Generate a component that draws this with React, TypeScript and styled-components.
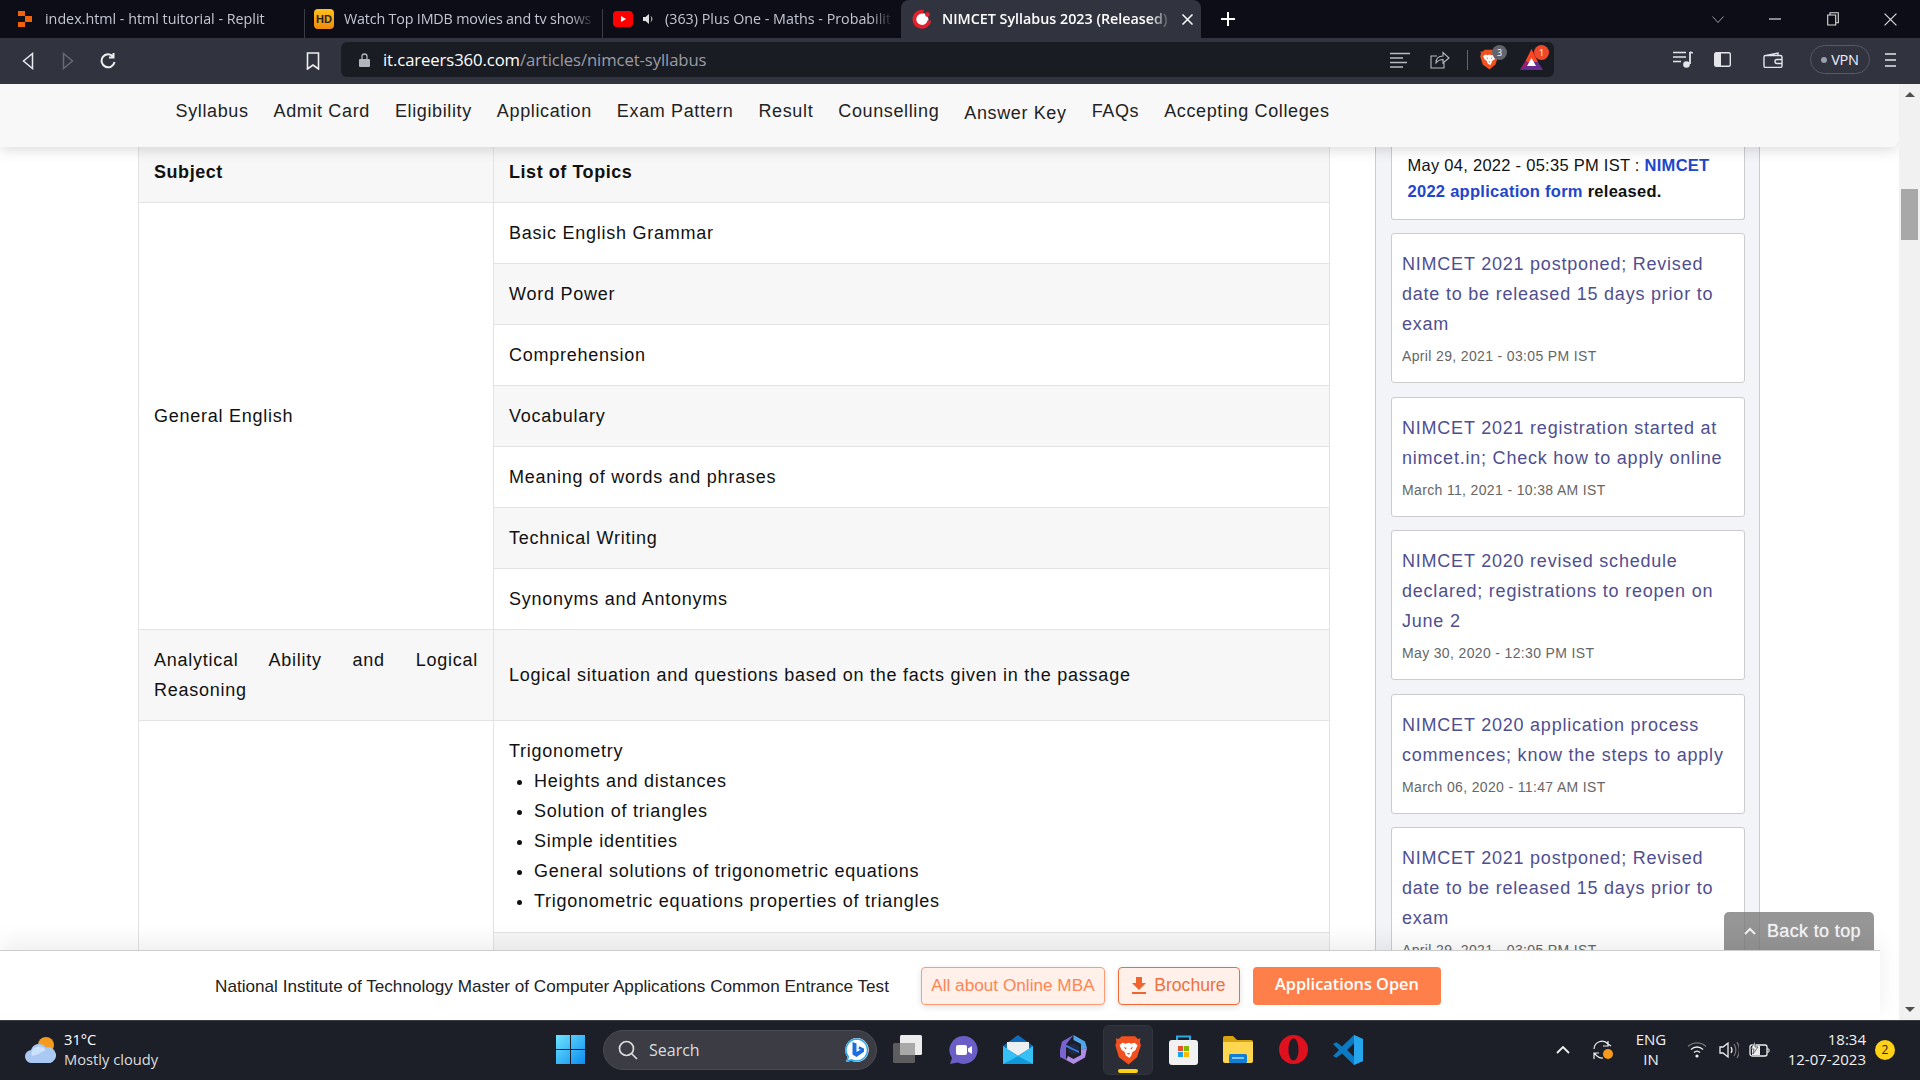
import React from 'react';
import styled, { createGlobalStyle } from 'styled-components';

const Global = createGlobalStyle`
  html, body { margin: 0; padding: 0; width: 1920px; height: 1080px; overflow: hidden; background: #fff; }
  body { font-family: "Liberation Sans", Arial, sans-serif; color: #111; }
  * { box-sizing: border-box; }
`;

const Shell = styled.div`
  width: 1920px; height: 1080px; display: flex; flex-direction: column; overflow: hidden;
`;

/* ---------- tab strip ---------- */
const TabStrip = styled.div`
  height: 38px; flex: none; background: #0c0d16; display: flex; align-items: stretch;
  font-family: "Open Sans", sans-serif;
`;
const Tab = styled.div<{ $w: number; $pad: number; $active?: boolean; $divider?: boolean }>`
  width: ${p => p.$w}px; flex: none; display: flex; align-items: center; gap: 10px;
  padding-left: ${p => p.$pad}px; padding-right: 8px; position: relative;
  font-size: 14.3px; color: ${p => (p.$active ? '#fff' : '#c3c6d2')};
  font-weight: ${p => (p.$active ? 600 : 400)};
  background: ${p => (p.$active ? '#31343f' : 'transparent')};
  border-radius: ${p => (p.$active ? '8px 8px 0 0' : '0')};
  ${p => p.$divider && `
    &::after { content: ''; position: absolute; right: 0; top: 9px; bottom: 0; width: 1px; background: #3a3c46; }
  `}
`;
const TabTitle = styled.span<{ $nudge?: number; $tight?: boolean }>`
  flex: 1; min-width: 0; white-space: nowrap; overflow: hidden; margin-left: ${p => p.$nudge ?? 0}px; padding-bottom: 2px;
  letter-spacing: ${p => (p.$tight ? '-0.17px' : '0')};
  -webkit-mask-image: linear-gradient(90deg, #000 90%, transparent 100%);
  mask-image: linear-gradient(90deg, #000 90%, transparent 100%);
`;
const HdBadge = styled.span`
  width: 20px; height: 20px; border-radius: 4px; flex: none; background: linear-gradient(#ffc21a, #f08a0c);
  color: #222; font: 700 11px "Liberation Sans", sans-serif; display: flex; align-items: center; justify-content: center;
`;
const NewTab = styled.div`
  width: 54px; display: flex; align-items: center; justify-content: center; flex: none;
`;
const WindowControls = styled.div`
  margin-left: auto; display: flex; align-items: center; padding-right: 1px;
`;
const WinBtn = styled.div`
  width: 57.5px; display: flex; justify-content: center; align-items: center;
`;

/* ---------- toolbar ---------- */
const Toolbar = styled.div`
  height: 46px; flex: none; background: #31343f; display: flex; align-items: center; font-family: "Open Sans", sans-serif;
`;
const NavButtons = styled.div`
  width: 341px; flex: none; display: flex; align-items: center;
`;
const BarSlot = styled.div<{ $w: number; $left?: number }>`
  width: ${p => p.$w}px; margin-left: ${p => p.$left ?? 0}px; flex: none; display: flex; align-items: center; justify-content: center; position: relative;
`;
const UrlBox = styled.div`
  width: 1213px; height: 35px; flex: none; background: #1a1c23; border-radius: 6px;
  display: flex; align-items: center; padding-left: 17px; margin-top: -3px;
`;
const LockIcon = styled.svg`
  flex: none; margin-left: 1px;
`;
const UrlText = styled.div`
  margin-left: 13px; font-size: 16.7px; color: #9a9da7; white-space: nowrap; letter-spacing: -0.1px;
  b { font-weight: 400; color: #fff; }
`;
const UrlTools = styled.div`
  margin-left: auto; display: flex; align-items: center; padding-right: 11px;
`;
const UrlSep = styled.div`
  width: 1px; height: 20px; background: #666; margin: 0 12px 0 17px;
`;
const CountBadge = styled.span<{ $bg: string; $right: number }>`
  position: absolute; top: -4px; right: ${p => p.$right}px; width: 15px; height: 15px; border-radius: 50%;
  background: ${p => p.$bg}; color: #fff; font: 400 9px "Open Sans", sans-serif;
  display: flex; align-items: center; justify-content: center;
`;
const VpnPill = styled.div`
  width: 60px; height: 29px; border: 1px solid #555a68; border-radius: 15px; margin-left: 27px; flex: none;
  display: flex; align-items: center; justify-content: center; gap: 4px; color: #eef; font-size: 14.5px; letter-spacing: -0.2px;
  i { width: 6px; height: 6px; border-radius: 50%; background: #9a9eac; }
`;
const BrowserTail = styled.div`
  display: flex; align-items: center; margin-left: 119px; margin-top: -3px;
`;

/* ---------- page ---------- */
const Viewport = styled.div`
  flex: 1; min-height: 0; display: flex;
`;
const Page = styled.div`
  flex: 1; min-width: 0; position: relative; overflow: hidden; background: #fff;
  display: flex; flex-direction: column;
`;
const Scrollbar = styled.div`
  width: 21px; flex: none; background: #f1f1f1; display: flex; flex-direction: column; align-items: center; position: relative;
`;
const ScrollArrow = styled.div<{ $down?: boolean }>`
  position: absolute; ${p => (p.$down ? 'bottom: 8px;' : 'top: 8px;')} width: 0; height: 0;
  border-left: 5px solid transparent; border-right: 5px solid transparent;
  ${p => (p.$down ? 'border-top: 5px solid #505050;' : 'border-bottom: 5px solid #505050;')}
`;
const ScrollThumb = styled.div`
  width: 17px; height: 51px; background: #a8a8a8; margin-top: 105px;
`;
const SectionNav = styled.nav`
  height: 63px; flex: none; background: #f8f8f8; border-radius: 0 0 8px 0; position: relative; z-index: 3;
  box-shadow: 0 3px 14px rgba(0,0,0,.14); display: flex; align-items: center; padding-left: 175.5px; padding-bottom: 8px; gap: 25px;
`;
const NavLink = styled.span<{ $drop?: boolean }>`
  font-size: 18px; letter-spacing: 0.63px; color: #222; white-space: nowrap;
  ${p => p.$drop && 'transform: translateY(2px);'}
`;
const Content = styled.div`
  flex: 1; min-height: 0; display: flex; align-items: flex-start; padding-left: 138px;
`;
const Table = styled.table`
  width: 1192px; flex: none; table-layout: fixed; border-collapse: separate; border-spacing: 0;
  border-left: 1px solid #e3e3e3; border-right: 1px solid #e3e3e3;
  font-size: 18px; line-height: 30px; letter-spacing: 0.75px; color: #111;
  th { background: #f7f7f7; font-weight: 700; text-align: left; padding: 10px 15px 15px; border-bottom: 1px solid #e3e3e3; letter-spacing: 0.55px; }
  td { padding: 15px; border-bottom: 1px solid #e3e3e3; background: #fff; vertical-align: middle; }
  tr:nth-child(even) td { background: #f7f7f7; }
  th:first-child, td:first-child { width: 355px; border-right: 1px solid #e3e3e3; }
  tr td.topic { border-right: 0; }
  tr.spanrow td { border-right: 0; }
  tr.spanrow td:first-child { border-right: 1px solid #e3e3e3; }
  tr.spanrow td.topic { border-right: 0; }
`;
const Justified = styled.td`
  text-align: justify;
`;
const BlankTopic = styled.td`
  height: 200px;
`;
const TopicList = styled.ul`
  margin: 0 0 1px; padding-left: 25px;
`;
const Side = styled.aside`
  width: 385px; margin-left: 45px; flex: none; align-self: stretch; background: #f3f4f8;
  border-left: 1px solid #ccc; border-right: 1px solid #ccc; padding-left: 15px; padding-right: 14px;
  display: flex; flex-direction: column; gap: 13.5px;
`;
const LeadCard = styled.div`
  background: #fff; border: 1px solid #ccc; border-top: 0; border-radius: 0 0 3px 3px;
  padding: 5px 15.5px 14.5px; font-size: 16.5px; line-height: 26px; letter-spacing: 0.27px; color: #111;
  b { font-weight: 700; }
  a { color: #2146cc; font-weight: 700; text-decoration: none; }
`;
const LeadLine = styled.div`
  white-space: nowrap;
`;
const NewsCard = styled.div`
  flex: none; background: #fff; border: 1px solid #ccc; border-radius: 3px; padding: 15px 10px 16px;
`;
const NewsTitle = styled.div`
  font-size: 18px; line-height: 30px; letter-spacing: 0.78px; color: #4f4f8f;
`;
const NewsDate = styled.div`
  font-size: 14px; line-height: 20px; margin-top: 7px; letter-spacing: 0.35px; color: #666;
`;
const BackToTop = styled.div`
  position: absolute; right: 25px; bottom: 70px; width: 150px; height: 38px; z-index: 4;
  background: rgba(120,120,120,.78); border-radius: 5px 5px 0 0; color: #f4f4f4; font-size: 18px; letter-spacing: .35px;
  text-shadow: 0 0 1px rgba(255,255,255,.7);
  display: flex; align-items: center; gap: 11px; padding-left: 20px;
`;
const BottomBar = styled.div`
  position: absolute; left: 0; right: 19px; bottom: 0; height: 70px; z-index: 4; background: #fff;
  border-top: 1px solid #ccc; box-shadow: 0 -8px 22px rgba(0,0,0,.07);
  display: flex; align-items: center; padding-left: 215px;
`;
const BarText = styled.span`
  font-size: 17.15px; color: #222; white-space: nowrap; margin-right: 32px; margin-top: 1px;
`;
const OutlineBtn = styled.div<{ $w: number; $strong?: boolean }>`
  width: ${p => p.$w}px; height: 38px; margin-right: 13px; background: #fff0ea; border-radius: 4px;
  border: 1px solid ${p => (p.$strong ? '#f26a35' : '#ff9a73')}; color: ${p => (p.$strong ? '#f0703e' : '#ff8553')};
  font-size: ${p => (p.$strong ? 17.6 : 17.2)}px; display: flex; align-items: center; justify-content: center; gap: 8px;
  box-shadow: 0 2px 6px rgba(0,0,0,.12); white-space: nowrap;
`;
const SolidBtn = styled.div`
  width: 188px; height: 38px; background: #ff7f4a; border-radius: 4px; color: #fff; padding-bottom: 4px;
  font: 600 16.3px "Open Sans", sans-serif; display: flex; align-items: center; justify-content: center;
`;

/* ---------- taskbar ---------- */
const Taskbar = styled.div`
  height: 60px; flex: none; background: #1c1f28; border-top: 1px solid #3a3d45; display: flex; align-items: center; padding: 0 25px 2px;
  font-family: "Open Sans", sans-serif; color: #f1f1f1;
`;
const Weather = styled.div`
  width: 531px; flex: none; display: flex; align-items: center; gap: 8px;
`;
const WeatherText = styled.div`
  font-size: 14.7px; line-height: 20px; color: #ddd; margin-top: -2px; b { font-weight: 400; display: block; color: #fff; }
`;
const SearchPill = styled.div`
  width: 274px; height: 40px; margin-left: 18px; flex: none; background: #3b3c44; border: 1px solid #4a4b53; border-radius: 20px;
  display: flex; align-items: center; padding: 0 7px 0 14px; gap: 11px; font-size: 16px; color: #ddd;
`;
const SearchLabel = styled.span`
  flex: 1; padding-top: 1px;
`;
const AppSlot = styled.div<{ $active?: boolean; $lead?: boolean }>`
  width: 55px; height: 50px; flex: none; display: flex; align-items: center; justify-content: center; position: relative;
  ${p => p.$lead && 'width: 55.5px; margin-left: 3px;'}
  ${p => p.$active && 'background: #2b2d36; border-radius: 6px; border: 1px solid #33353e; width: 50px; margin: 0 2.5px;'}
`;
const ActiveDot = styled.span`
  position: absolute; bottom: 1px; left: 14px; width: 20px; height: 4px; border-radius: 2px; background: #fcd116;
`;
const Tray = styled.div`
  margin-left: auto; display: flex; align-items: center;
`;
const TraySlot = styled.div<{ $w: number; $end?: boolean }>`
  width: ${p => p.$w}px; flex: none; display: flex; align-items: center; justify-content: ${p => (p.$end ? 'flex-end' : 'center')};
`;
const TrayText = styled.div<{ $right?: boolean }>`
  font-size: 15px; line-height: 20px; color: #f1f1f1; text-align: ${p => (p.$right ? 'right' : 'center')}; white-space: nowrap; margin-top: -2px;
`;
const Notify = styled.div`
  width: 20px; height: 20px; margin-left: 9px; border-radius: 50%; background: #fcd116; color: #222; font-size: 12px;
  display: flex; align-items: center; justify-content: center;
`;

/* ---------- icons ---------- */
const ReplitIcon = () => (
  <svg width="14" height="16" viewBox="0 0 14 16" style={{ flex: 'none' }}>
    <path fill="#f26207" d="M0 0h7v5H0zM7 5h7v6H7zM0 11h7v5H0z" />
  </svg>
);
const YtIcon = () => (
  <svg width="20" height="20" viewBox="0 0 20 20" style={{ flex: 'none' }}>
    <rect y="2" width="20" height="16" rx="4" fill="#f00" /><path d="M8 7l5 3-5 3z" fill="#fff" />
  </svg>
);
const SpeakerSmall = () => (
  <svg width="12" height="12" viewBox="0 0 12 12" style={{ flex: 'none' }}>
    <path d="M0 4h2.500L6 1v10L2.500 8H0z" fill="#ddd" /><path d="M8 3.500c1.200 1.500 1.200 3.500 0 5" stroke="#ddd" fill="none" />
  </svg>
);
const CareersIcon = () => (
  <svg width="20" height="20" viewBox="0 0 20 20" style={{ flex: 'none' }}>
    <circle cx="10" cy="10.500" r="6.500" fill="#fff" />
    <path d="M11.500 2.800A7.600 7.600 0 1 0 17.500 11.500" fill="none" stroke="#e3202c" strokeWidth="3.800" />
    <circle cx="15.500" cy="5.500" r="2.400" fill="#e3202c" />
  </svg>
);
const CloseX = ({ s = 11, c = '#fff', w = 1.5 }: { s?: number; c?: string; w?: number }) => (
  <svg width={s} height={s} viewBox="0 0 11 11" style={{ flex: 'none' }}>
    <path d="M.5.5l10 10M10.500.5l-10 10" stroke={c} strokeWidth={w} />
  </svg>
);
const Stroke = ({ w, h, d, c = '#e4e5ea', sw = 1.5 }: { w: number; h: number; d: string; c?: string; sw?: number }) => (
  <svg width={w} height={h} viewBox={`0 0 ${w} ${h}`} fill="none" stroke={c} strokeWidth={sw} style={{ flex: 'none' }}>
    <path d={d} />
  </svg>
);
const BraveShield = ({ s = 20 }: { s?: number }) => (
  <svg width={s * 0.9} height={s} viewBox="0 0 22 25" style={{ flex: 'none' }}>
    <path fill="#f1511e" d="M5.500 1h11l2.300 2.300 2.200-.6-.5 3.300.9 2.500-3.300 10L11 24.500 3 18.500l-3-10 .9-2.500L.4 2.700l2.200.6z" />
    <path fill="#fff" d="M6 6.500l2.700.8L11 6.500l2.300.8 2.700-.8 2.500 2-1.800 4.200-2.400 1.400-1 3-1.300 1.800h-.4L8.700 17l-1-3-2.400-1.400L3.500 8.500z" />
    <path fill="#f1511e" d="M7 10l2.500.8-1 1.200zM15 10l-2.500.8 1 1.200zM9.500 15h3L11 16.500z" />
  </svg>
);
const BatIcon = () => (
  <svg width="23" height="21" viewBox="0 0 23 21" style={{ flex: 'none' }}>
    <path fill="#662d91" d="M0 21L5 13h13l5 8z" />
    <path fill="#ff4724" d="M11.500 0L18 13H5z" />
    <path fill="#9e1f63" d="M0 21L6 11l2 4z" />
    <path fill="#fff" d="M11.500 9L16 17H7z" />
  </svg>
);
const WinLogo = () => (
  <svg width="29" height="29" viewBox="0 0 29 29" style={{ flex: 'none' }}>
    <defs><linearGradient id="wl" x1="0" y1="0" x2="1" y2="1"><stop offset="0" stopColor="#6fe4ff" /><stop offset="1" stopColor="#0a8cf0" /></linearGradient></defs>
    <path fill="url(#wl)" d="M0 0h14v14H0zM15 0h14v14H15zM0 15h14v14H0zM15 15h14v14H15z" />
  </svg>
);
const BingIcon = () => (
  <svg width="25" height="26" viewBox="0 0 25 26" style={{ flex: 'none' }}>
    <path fill="#fff" d="M12.500 1a12 12 0 1 1-5 22.800L2 25l1.500-5A12 12 0 0 1 12.500 1z" />
    <path fill="#1c6fe0" d="M8.500 5l4 1.500V15l4-2.200-2.200-1 1-2.500 4.700 2.300v3.200L12.500 20l-4-2.500z" />
    <path fill="none" stroke="#28a8ea" strokeWidth="1.500" d="M12.500 2a11 11 0 1 1-4.800 20.900L3 24l1.300-4.300A11 11 0 0 1 12.500 2z" />
  </svg>
);
const TaskView = () => (
  <svg width="30" height="29" viewBox="0 0 30 29" style={{ flex: 'none' }}>
    <rect x="0" y="8" width="22" height="20" rx="1.500" fill="#5d5d60" />
    <rect x="7" y="0" width="22" height="20" rx="1.500" fill="#ececec" />
    <rect x="7" y="8" width="15" height="12" fill="#a9a9a9" />
  </svg>
);
const ChatIcon = () => (
  <svg width="29" height="28" viewBox="0 0 29 28" style={{ flex: 'none' }}>
    <path fill="#6b5fc7" d="M14.500 0a14 14 0 1 1-6 26.600L1 28l2-6A14 14 0 0 1 14.500 0z" />
    <rect x="7" y="9" width="11" height="10" rx="2" fill="#fff" /><path d="M19 12.500l4-2.500v8l-4-2.500z" fill="#fff" />
  </svg>
);
const MailIcon = () => (
  <svg width="30" height="29" viewBox="0 0 30 29" style={{ flex: 'none' }}>
    <path fill="#0f6cbd" d="M15 0l15 11v4H0v-4z" />
    <path fill="#eceff2" d="M4 7h22v7l-11 7-11-7z" />
    <path fill="#35c1f5" d="M0 11l15 10 15-10v18H0z" />
    <path fill="#1197dc" d="M15 21l15 8H0l8-4z" />
  </svg>
);
const CopilotIcon = () => (
  <svg width="27" height="29" viewBox="0 0 27 29" style={{ flex: 'none' }}>
    <path fill="#4fa6e8" d="M13.500 0L25 6.500 27 13l-6 2V9L13.500 5z" />
    <path fill="#7a62d0" d="M13.500 0L2 6.500 0 15v7l6 3V9.500z" />
    <path fill="#b18ce6" d="M6 25l7.500 4L25 22.500 27 13l-6 2v5l-7.500 4L8 21z" />
    <path fill="#1f2a44" d="M8 14a5.500 5.500 0 1 1 11 0 5.500 5.500 0 0 1-11 0z" />
    <path fill="#3f78d8" d="M6 9.500l7.500 4L19 16v2L6 12z" />
  </svg>
);
const StoreIcon = () => (
  <svg width="29" height="30" viewBox="0 0 29 30" style={{ flex: 'none' }}>
    <path d="M8 6V1.500h13V6" fill="none" stroke="#29a9e8" strokeWidth="2" />
    <rect y="5" width="29" height="25" rx="3" fill="#f1f1f1" />
    <path fill="#e8502e" d="M9 11h5v5H9z" /><path fill="#7fb900" d="M15 11h5v5h-5z" />
    <path fill="#1aa3e8" d="M9 17h5v5H9z" /><path fill="#ffb900" d="M15 17h5v5h-5z" />
  </svg>
);
const FolderIcon = () => (
  <svg width="30" height="27" viewBox="0 0 30 27" style={{ flex: 'none' }}>
    <path fill="#d9a30f" d="M0 2a2 2 0 0 1 2-2h8l4 4h14a2 2 0 0 1 2 2v19H0z" />
    <path fill="#ffd64f" d="M0 6h30v19a2 2 0 0 1-2 2H2a2 2 0 0 1-2-2z" />
    <rect x="6" y="18" width="18" height="9" rx="1.500" fill="#0f7ed4" /><rect x="9" y="21" width="12" height="2" fill="#7cc4f2" />
  </svg>
);
const OperaIcon = () => (
  <svg width="29" height="29" viewBox="0 0 29 29" style={{ flex: 'none' }}>
    <path fillRule="evenodd" fill="#e0111f" d="M14.500 0a14.500 14.500 0 1 0 0 29 14.500 14.500 0 0 0 0-29zm0 3.500c3 0 5 4.800 5 11s-2 11-5 11-5-4.800-5-11 2-11 5-11z" />
  </svg>
);
const VsCodeIcon = () => (
  <svg width="30" height="30" viewBox="0 0 30 30" style={{ flex: 'none' }}>
    <path fill="#0b7ac2" d="M21 0l9 4v22l-9 4L9 18.500l-5.500 4.200L0 21l6-6-6-6 3.500-1.700L9 11.500z" />
    <path fill="#24a5ec" d="M21 0l9 4v22l-9 4zM21 8l-7 7 7 7z" fillRule="evenodd" />
    <path fill="#1c1f28" d="M21 8v14l-7-7z" />
  </svg>
);
const WeatherIcon = () => (
  <svg width="31" height="27" viewBox="0 0 31 27" style={{ flex: 'none' }}>
    <circle cx="21" cy="9" r="8" fill="#f59a1c" />
    <path fill="#a9c9f2" d="M7 27a6.500 6.500 0 0 1-1-13A8.500 8.500 0 0 1 21 11.500 6 6 0 0 1 25 27z" />
    <path fill="#dcebff" d="M7 20a6 6 0 0 1 0-5 8 8 0 0 1 13-2c1 3-4 2-6 5z" opacity=".7" />
  </svg>
);
const DownloadIcon = () => (
  <svg width="14" height="17" viewBox="0 0 14 17" style={{ flex: 'none' }}>
    <path fill="#f0642e" d="M4 0h6v6h4l-7 7-7-7h4zM0 15h14v2H0z" />
  </svg>
);

const news = [
  { t: 'NIMCET 2021 postponed; Revised date to be released 15 days prior to exam', d: 'April 29, 2021 - 03:05 PM IST' },
  { t: 'NIMCET 2021 registration started at nimcet.in; Check how to apply online', d: 'March 11, 2021 - 10:38 AM IST' },
  { t: 'NIMCET 2020 revised schedule declared; registrations to reopen on June 2', d: 'May 30, 2020 - 12:30 PM IST' },
  { t: 'NIMCET 2020 application process commences; know the steps to apply', d: 'March 06, 2020 - 11:47 AM IST' },
  { t: 'NIMCET 2021 postponed; Revised date to be released 15 days prior to exam', d: 'April 29, 2021 - 03:05 PM IST' },
];
const english = ['Word Power', 'Comprehension', 'Vocabulary', 'Meaning of words and phrases', 'Technical Writing', 'Synonyms and Antonyms'];
const trig = ['Heights and distances', 'Solution of triangles', 'Simple identities', 'General solutions of trigonometric equations', 'Trigonometric equations properties of triangles'];
const links = ['Syllabus', 'Admit Card', 'Eligibility', 'Application', 'Exam Pattern', 'Result', 'Counselling', 'Answer Key', 'FAQs', 'Accepting Colleges'];

export default function App() {
  return (
    <Shell>
      <Global />
      <TabStrip>
        <Tab $w={305} $pad={18} $divider>
          <ReplitIcon /><TabTitle $nudge={3}>index.html - html tuitorial - Replit</TabTitle>
        </Tab>
        <Tab $w={298} $pad={9} $divider>
          <HdBadge>HD</HdBadge><TabTitle $tight>Watch Top IMDB movies and tv shows</TabTitle>
        </Tab>
        <Tab $w={298} $pad={10}>
          <YtIcon /><SpeakerSmall /><TabTitle>(363) Plus One - Maths - Probabilit</TabTitle>
        </Tab>
        <Tab $w={300} $pad={11} $active>
          <CareersIcon /><TabTitle>NIMCET Syllabus 2023 (Released)</TabTitle><CloseX />
        </Tab>
        <NewTab><Stroke w={16} h={16} d="M8 1v14M1 8h14" c="#fff" sw={2} /></NewTab>
        <WindowControls>
          <WinBtn><Stroke w={12} h={7} d="M.5.5L6 6.500 11.500.5" c="#9a9ca6" sw={1} /></WinBtn>
          <WinBtn><Stroke w={12} h={2} d="M0 1h12" c="#ddd" sw={1.2} /></WinBtn>
          <WinBtn><Stroke w={12} h={14} d="M.7 3h8v10h-8zM3 3V.7h8.300v10H9" c="#ddd" sw={1.1} /></WinBtn>
          <WinBtn><CloseX s={13} c="#ddd" w={1} /></WinBtn>
        </WindowControls>
      </TabStrip>

      <Toolbar>
        <NavButtons>
          <BarSlot $w={12} $left={22}><Stroke w={12} h={18} d="M10.500 1.500L1.500 9l9 7.500z" c="#e8e9ee" /></BarSlot>
          <BarSlot $w={12} $left={28}><Stroke w={12} h={18} d="M1.500 1.500L10.500 9l-9 7.500z" c="#666a76" /></BarSlot>
          <BarSlot $w={16} $left={26}><Stroke w={16} h={18} d="M13 4.500A6.500 6.500 0 1 0 14.500 10M13.500 1v4.500H9" c="#eee" sw={2} /></BarSlot>
          <BarSlot $w={14} $left={190}><Stroke w={14} h={18} d="M1.500 1h11v16L7 13l-5.500 4z" c="#eee" sw={1.6} /></BarSlot>
        </NavButtons>
        <UrlBox>
          <LockIcon width="11" height="14" viewBox="0 0 11 14">
            <path d="M3 6V3.500a2.500 2.500 0 0 1 5 0V6" fill="none" stroke="#b3b5bd" strokeWidth="1.300" /><rect y="6" width="11" height="8" rx="1" fill="#b3b5bd" />
          </LockIcon>
          <UrlText><b>it.careers360.com</b>/articles/nimcet-syllabus</UrlText>
          <UrlTools>
            <BarSlot $w={20}><Stroke w={20} h={16} d="M0 1.500h20M0 6h13M0 10.500h17M0 15h13" c="#b8bac2" sw={1.5} /></BarSlot>
            <BarSlot $w={20} $left={20}><Stroke w={20} h={18} d="M7 5H1v12h13v-5M6 12c0-5 3-7 7-7V1.500L19 7l-6 5V8.500c-3 0-5 1-7 3.500z" c="#b8bac2" sw={1.1} /></BarSlot>
            <UrlSep />
            <BarSlot $w={18}><BraveShield s={21} /><CountBadge $bg="#62636d" $right={-9}>3</CountBadge></BarSlot>
            <BarSlot $w={23} $left={22}><BatIcon /><CountBadge $bg="#f0492a" $right={-6}>1</CountBadge></BarSlot>
          </UrlTools>
        </UrlBox>
        <BrowserTail>
          <BarSlot $w={20}><svg width="20" height="17" viewBox="0 0 20 17" fill="none"><path d="M0 1.500h13M0 6h13M0 10.500h8" stroke="#e4e5ea" strokeWidth="1.500" /><path d="M17 1v12" stroke="#e4e5ea" strokeWidth="1.800" /><circle cx="13.500" cy="13.500" r="3.300" fill="#e4e5ea" /><path d="M17 1l3 1" stroke="#e4e5ea" strokeWidth="1.500" /></svg></BarSlot>
          <BarSlot $w={17} $left={21}><svg width="17" height="15" viewBox="0 0 17 15"><rect x=".7" y=".7" width="15.600" height="13.600" rx="1.500" fill="none" stroke="#e4e5ea" strokeWidth="1.400" /><rect x="1" y="1" width="6" height="13" fill="#e4e5ea" /></svg></BarSlot>
          <BarSlot $w={20} $left={32}><Stroke w={20} h={16} d="M3 3.500L15 1v2.500M1 5a1.500 1.500 0 0 1 1.500-1.500h15A1.500 1.500 0 0 1 19 5v9a1.500 1.500 0 0 1-1.500 1.500h-15A1.500 1.500 0 0 1 1 14zM19 7.500h-5a2 2 0 0 0 0 4h5" sw={1.4} /></BarSlot>
          <VpnPill><i />VPN</VpnPill>
          <BarSlot $w={11} $left={15}><Stroke w={11} h={14} d="M0 1h11M0 7h11M0 13h11" c="#e4e5ea" sw={1.6} /></BarSlot>
        </BrowserTail>
      </Toolbar>

      <Viewport>
        <Page>
          <SectionNav>
            {links.map(l => <NavLink key={l} $drop={l === 'Answer Key'}>{l}</NavLink>)}
          </SectionNav>
          <Content>
            <Table>
              <thead><tr><th>Subject</th><th>List of Topics</th></tr></thead>
              <tbody>
                <tr className="spanrow"><td rowSpan={7}>General English</td><td className="topic">Basic English Grammar</td></tr>
                {english.map(e => <tr className="spanrow" key={e}><td className="topic">{e}</td></tr>)}
                <tr><Justified>Analytical Ability and Logical Reasoning</Justified><td>Logical situation and questions based on the facts given in the passage</td></tr>
                <tr className="spanrow">
                  <td rowSpan={2} />
                  <td className="topic">
                    Trigonometry
                    <TopicList>{trig.map(t => <li key={t}>{t}</li>)}</TopicList>
                  </td>
                </tr>
                <tr className="spanrow"><BlankTopic className="topic" /></tr>
              </tbody>
            </Table>
            <Side>
              <LeadCard>
                <LeadLine>May 04, 2022 - 05:35 PM IST : <a>NIMCET</a></LeadLine>
                <LeadLine><a>2022 application form</a> <b>released.</b></LeadLine>
              </LeadCard>
              {news.map((n, i) => (
                <NewsCard key={i}><NewsTitle>{n.t}</NewsTitle><NewsDate>{n.d}</NewsDate></NewsCard>
              ))}
            </Side>
          </Content>
          <BackToTop>
            <Stroke w={12} h={8} d="M1 7l5-5 5 5" c="#f2f2f2" sw={2} />
            Back to top
          </BackToTop>
          <BottomBar>
            <BarText>National Institute of Technology Master of Computer Applications Common Entrance Test</BarText>
            <OutlineBtn $w={184}>All about Online MBA</OutlineBtn>
            <OutlineBtn $w={122} $strong><DownloadIcon />Brochure</OutlineBtn>
            <SolidBtn>Applications Open</SolidBtn>
          </BottomBar>
        </Page>
        <Scrollbar>
          <ScrollArrow />
          <ScrollThumb />
          <ScrollArrow $down />
        </Scrollbar>
      </Viewport>

      <Taskbar>
        <Weather>
          <WeatherIcon />
          <WeatherText><b>31°C</b>Mostly cloudy</WeatherText>
        </Weather>
        <WinLogo />
        <SearchPill>
          <Stroke w={20} h={20} d="M8.500 1.500a7 7 0 1 0 0 14 7 7 0 0 0 0-14zM13.500 13.500l5.500 5.500" c="#ddd" sw={1.7} />
          <SearchLabel>Search</SearchLabel>
          <BingIcon />
        </SearchPill>
        <AppSlot $lead><TaskView /></AppSlot>
        <AppSlot><ChatIcon /></AppSlot>
        <AppSlot><MailIcon /></AppSlot>
        <AppSlot><CopilotIcon /></AppSlot>
        <AppSlot $active><BraveShield s={30} /><ActiveDot /></AppSlot>
        <AppSlot><StoreIcon /></AppSlot>
        <AppSlot><FolderIcon /></AppSlot>
        <AppSlot><OperaIcon /></AppSlot>
        <AppSlot><VsCodeIcon /></AppSlot>
        <Tray>
          <TraySlot $w={40}><Stroke w={14} h={8} d="M1 7l6-6 6 6" c="#f1f1f1" sw={1.8} /></TraySlot>
          <TraySlot $w={40}>
            <svg width="20" height="20" viewBox="0 0 20 20" fill="none"><path d="M1 9a8 8 0 0 1 14-5l3 2M15 1v5h-5M1 13l3 3a8 8 0 0 0 6 2M1 19v-6h5" stroke="#eee" strokeWidth="1.200" /><circle cx="15" cy="14" r="5" fill="#f59a1c" /></svg>
          </TraySlot>
          <TraySlot $w={56}><TrayText>ENG<br />IN</TrayText></TraySlot>
          <TraySlot $w={36}>
            <svg width="20" height="17" viewBox="0 0 20 17" fill="none"><path d="M1 5.500a13 13 0 0 1 18 0" stroke="#777" strokeWidth="1.300" /><path d="M4 8.500a8.500 8.500 0 0 1 12 0M7 11.500a4.500 4.500 0 0 1 6 0" stroke="#eee" strokeWidth="1.300" /><circle cx="10" cy="15" r="1.600" fill="#eee" /></svg>
          </TraySlot>
          <TraySlot $w={28}>
            <svg width="20" height="18" viewBox="0 0 20 18" fill="none"><path d="M1 6h3l5-4v14l-5-4H1z" stroke="#eee" strokeWidth="1.300" /><path d="M12 6c1.300 2 1.300 4 0 6" stroke="#eee" strokeWidth="1.300" /><path d="M15 3c2.500 4 2.500 8 0 12M18 1c3 5 3 11 0 16" stroke="#777" strokeWidth="1.200" /></svg>
          </TraySlot>
          <TraySlot $w={32}>
            <svg width="21" height="17" viewBox="0 0 21 17" fill="none"><rect x="1" y="4" width="17" height="11" rx="2" stroke="#eee" strokeWidth="1.300" /><path d="M18 8h2v3h-2" stroke="#eee" /><path d="M3 5h8v9H3z" fill="#eee" /><path d="M6 0L2 8h3l-1 5 5-7H6z" fill="#eee" stroke="#1c1f28" strokeWidth=".6" /></svg>
          </TraySlot>
          <TraySlot $w={91} $end><TrayText $right>18:34<br />12-07-2023</TrayText></TraySlot>
          <Notify>2</Notify>
        </Tray>
      </Taskbar>
    </Shell>
  );
}
